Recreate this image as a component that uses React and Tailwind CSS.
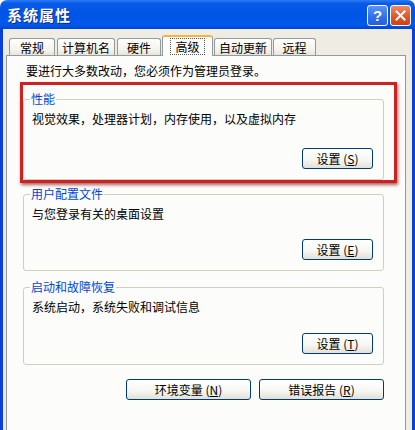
import React from 'react';

const tabs = [
  { label: '常规', w: 'w-[46px]', ml: 'ml-0' },
  { label: '计算机名', w: 'w-[58px]', ml: 'ml-[2px]' },
  { label: '硬件', w: 'w-[44px]', ml: 'ml-[2px]' },
  { label: '高级', w: 'w-[51px]', ml: 'ml-[1px]', active: true },
  { label: '自动更新', w: 'w-[58px]', ml: 'ml-[1px]' },
  { label: '远程', w: 'w-[43px]', ml: 'ml-[1px]' },
];

const XpButton = ({ children, className = 'w-[71px]' }) => (
  <button
    className={`h-[21px] ${className} rounded-[3px] border border-[#003c74] bg-[linear-gradient(180deg,#ffffff_0%,#f7f7f3_55%,#e3e0d6_100%)] text-[12px] leading-none text-black flex items-center justify-center`}
  >
    {children}
  </button>
);

const GroupBox = ({ title, text, button, ptClass, gapClass, className = '' }) => (
  <fieldset className={`w-[361px] rounded-[3px] border border-[#d0d0bf] pl-[8px] pr-[10px] pb-[10px] ${className}`}>
    <legend className="-ml-[2px] px-[1px] leading-[14px] text-[#0046d5]">{title}</legend>
    <div className={`${ptClass} leading-[14px]`}>{text}</div>
    <div className={`flex justify-end ${gapClass}`}>
      <XpButton>{button}</XpButton>
    </div>
  </fieldset>
);

export default function App() {
  return (
    <div className="w-[415px] h-[430px] overflow-hidden bg-white font-['Noto_Sans_CJK_SC',sans-serif] text-[12px] text-black">
      {/* title bar */}
      <div className="h-[29px] rounded-t-[7px] flex items-center pl-[7px] pr-[4px] bg-[linear-gradient(180deg,#2a7cf4_0%,#0a5ae8_12%,#0055e5_45%,#0058ea_85%,#0045d8_100%)]">
        <span className="text-white font-bold text-[15px] leading-none tracking-[1px] [text-shadow:1px_1px_0_#0a2a8a]">系统属性</span>
        <div className="ml-auto flex gap-[2px] pt-[1px]">
          <div className="w-[21px] h-[21px] rounded-[3px] border border-white bg-[linear-gradient(180deg,#5b94f5_0%,#2f6fe8_60%,#2660d8_100%)] flex items-center justify-center text-white font-bold text-[15px] leading-none font-['Liberation_Sans',sans-serif]">
            ?
          </div>
          <div className="w-[21px] h-[21px] rounded-[3px] border border-white bg-[linear-gradient(180deg,#f08a62_0%,#e2582c_55%,#cc4218_100%)] flex items-center justify-center">
            <svg width="11" height="11" viewBox="0 0 11 11">
              <path d="M1.5 1.5 L9.5 9.5 M9.5 1.5 L1.5 9.5" stroke="#fff" strokeWidth="2" strokeLinecap="square" />
            </svg>
          </div>
        </div>
      </div>

      {/* body */}
      <div className="h-[401px] bg-[#efede3] border-x-[3px] border-[#0a3fd8]">
        {/* tabs */}
        <div className="flex items-end pt-[6px] pl-[6px]">
          {tabs.map((t) =>
            t.active ? (
              <div
                key={t.label}
                className={`${t.w} ${t.ml} relative z-10 -mb-px h-[21px] rounded-t-[3px] border border-b-0 border-[#919b9c] border-t-2 border-t-[#f5b53d] bg-[#fcfcfa] flex justify-center items-start pt-[1px]`}
              >
                <span className="leading-[15px] px-[4px] border border-dotted border-[#555]">{t.label}</span>
              </div>
            ) : (
              <div
                key={t.label}
                className={`${t.w} ${t.ml} h-[17px] rounded-t-[3px] border border-b-0 border-[#919b9c] bg-[linear-gradient(180deg,#ffffff_0%,#f3f2ec_70%,#e6e4dc_100%)] flex justify-center pt-[2px] leading-[14px]`}
              >
                {t.label}
              </div>
            )
          )}
        </div>

        {/* panel */}
        <div className="w-[400px] h-[400px] ml-[3px] border border-[#919b9c] bg-[#fcfcfa] pl-[16px] pt-[8px]">
          <div className="pl-[3px] leading-[14px]">要进行大多数改动，您必须作为管理员登录。</div>

          <div className="w-[377px] -ml-[3px] mt-[4px] border-[3px] border-[#cc2222] pt-[7px] shadow-[1px_2px_3px_rgba(110,0,0,0.6)]">
            <GroupBox
              title="性能"
              text="视觉效果，处理器计划，内存使用，以及虚拟内存"
              button={<>设置 (<u>S</u>)</>}
              ptClass="pt-[6px]"
              gapClass="mt-[22px]"
              className="pb-[9px]"
            />
          </div>

          <GroupBox
            title="用户配置文件"
            text="与您登录有关的桌面设置"
            button={<>设置 (<u>E</u>)</>}
            ptClass="pt-[6px]"
            gapClass="mt-[18px]"
            className="mt-[4px]"
          />

          <GroupBox
            title="启动和故障恢复"
            text="系统启动，系统失败和调试信息"
            button={<>设置 (<u>T</u>)</>}
            ptClass="pt-[6px]"
            gapClass="mt-[19px]"
            className="mt-[9px]"
          />

          <div className="w-[361px] flex justify-end gap-[8px] mt-[14px]">
            <XpButton className="w-[125px]">环境变量 (<u>N</u>)</XpButton>
            <XpButton className="w-[125px]">错误报告 (<u>R</u>)</XpButton>
          </div>
        </div>
      </div>
    </div>
  );
}
